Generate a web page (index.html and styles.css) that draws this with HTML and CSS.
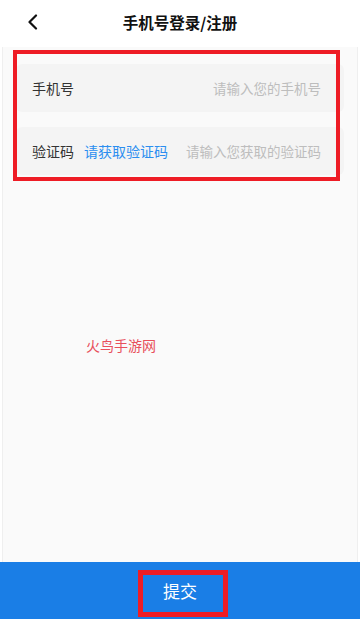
FILE: index.html
```html
<!DOCTYPE html>
<html lang="zh-CN">
<head>
<meta charset="utf-8">
<title>手机号登录/注册</title>
<link rel="stylesheet" href="styles.css">
</head>
<body>
<div class="page">
  <header class="header">
    <div class="back">
      <svg width="12" height="16" viewBox="0 0 12 16"><path d="M9 1.5 L2.5 8 L9 14.5" fill="none" stroke="#111" stroke-width="2.2" stroke-linecap="round" stroke-linejoin="round"/></svg>
    </div>
    <h1 class="title">手机号登录/注册</h1>
    <div></div>
  </header>
  <main class="main">
    <div class="row">
      <span class="label">手机号</span>
      <span class="placeholder">请输入您的手机号</span>
    </div>
    <div class="row">
      <span class="label">验证码</span>
      <span class="getcode">请获取验证码</span>
      <span class="placeholder">请输入您获取的验证码</span>
    </div>
  </main>
  <footer class="footer">
    <span class="submit">提交</span>
  </footer>
  <div class="watermark">火鸟手游网</div>
  <div class="mark mark-form"></div>
  <div class="mark mark-btn"></div>
</div>
</body>
</html>
```
FILE: styles.css
```css
html, body {
  margin: 0;
  padding: 0;
  background: #fff;
}
body {
  font-family: "Noto Sans CJK SC", "Noto Sans", sans-serif;
  color: #333;
}
.page {
  position: relative;
  width: 360px;
  height: 619px;
  display: flex;
  flex-direction: column;
  overflow: hidden;
}
.header {
  height: 47px;
  display: grid;
  grid-template-columns: 1fr auto 1fr;
  align-items: center;
  background: #fff;
}
.back {
  padding-left: 27px;
  display: flex;
  align-items: center;
  height: 47px;
  padding-bottom: 3px;
  box-sizing: border-box;
}
.title {
  margin: 0;
  font-size: 15.5px;
  font-weight: 700;
  color: #111;
  line-height: 20px;
  padding-bottom: 3px;
}
.main {
  flex: 1;
  background: #fafafa;
  margin: 0 2px;
  border-left: 1px solid #efefef;
  border-right: 1px solid #efefef;
  padding: 17px 13px 0;
  display: flex;
  flex-direction: column;
  gap: 15px;
}
.row {
  height: 48px;
  background: #f4f4f4;
  border-radius: 6px;
  display: flex;
  align-items: center;
  padding: 0 23px 0 16px;
  line-height: 20px;
}
.label {
  font-size: 14px;
  color: #333;
}
.getcode {
  font-size: 14px;
  color: #2b8ef0;
  margin-left: 10px;
}
.placeholder {
  margin-left: auto;
  font-size: 13.5px;
  color: #bdbdbd;
}
.footer {
  height: 57px;
  background: #1a7ee6;
  display: flex;
  align-items: center;
  justify-content: center;
}
.submit {
  color: #fff;
  font-size: 17px;
  line-height: 20px;
}
.watermark {
  position: absolute;
  left: 86px;
  top: 335px;
  font-size: 14px;
  line-height: 20px;
  color: #e8505c;
}
.mark {
  position: absolute;
  border: 4px solid #ee1c25;
  box-sizing: border-box;
}
.mark-form {
  left: 13px;
  top: 50px;
  width: 327px;
  height: 131px;
}
.mark-btn {
  left: 138px;
  top: 570px;
  width: 90px;
  height: 47px;
  border-width: 5px;
}
```
